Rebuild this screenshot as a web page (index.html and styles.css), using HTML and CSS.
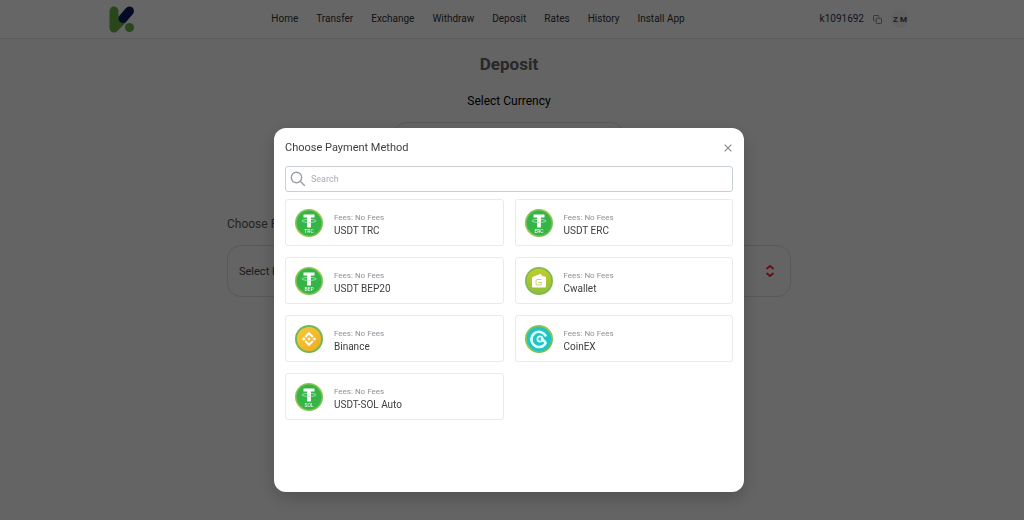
FILE: index.html
```html
<!DOCTYPE html>
<html lang="en">
<head>
<meta charset="utf-8">
<meta name="viewport" content="width=device-width, initial-scale=1">
<title>Deposit</title>
<link rel="stylesheet" href="styles.css">
</head>
<body>
<svg class="sprite" width="0" height="0" aria-hidden="true">
  <defs>
    <linearGradient id="lime" x1="0" y1="0" x2="1" y2="1"><stop offset="0" stop-color="#6fbf5a"/><stop offset=".5" stop-color="#a0c84a"/><stop offset="1" stop-color="#62b45a"/></linearGradient>
    <linearGradient id="gold" x1="0" y1="0" x2="1" y2="1"><stop offset="0" stop-color="#f5cb3c"/><stop offset="1" stop-color="#f2a91f"/></linearGradient>
    <linearGradient id="olive" x1="0" y1="0" x2="0" y2="1"><stop offset="0" stop-color="#c3cc2c"/><stop offset="1" stop-color="#8fbf3c"/></linearGradient>
    <symbol id="tether" viewBox="0 0 28 28">
      <circle cx="14" cy="14" r="14" fill="url(#lime)"/>
      <circle cx="14" cy="14" r="12.4" fill="#35b548"/>
      <path d="M8.500 5.500h11v3.100h-3.600v10h-3.800v-10H8.500z" fill="#fff"/>
      <path d="M12 10.500c-3 .1-5 .6-5 1.400s3 1.500 7 1.500 7-.7 7-1.500-2-1.300-5-1.400" fill="none" stroke="#b5e8bd" stroke-width=".8"/>
    </symbol>
  </defs>
</svg>

<header class="topbar">
  <div class="topbar-inner">
    <a class="logo" href="#" aria-label="Home page">
      <svg width="26" height="27" viewBox="0 0 26 27" fill="none" stroke-linecap="round" stroke-width="9">
        <path d="M5 5v17l9-9" stroke="#66b245" stroke-linejoin="round"/>
        <path d="M14 12.500l6.500-7.500" stroke="#0a1d5c"/>
        <circle cx="20.500" cy="21.500" r="4.500" fill="#66b245"/>
      </svg>
    </a>
    <nav class="nav" aria-label="Main">
      <a href="#">Home</a><a href="#">Transfer</a><a href="#">Exchange</a><a href="#">Withdraw</a><a href="#">Deposit</a><a href="#">Rates</a><a href="#">History</a><a href="#">Install App</a>
    </nav>
    <div class="account">
      <span class="account-id">k1091692</span>
      <button class="copy" type="button" aria-label="Copy account number">
        <svg width="9" height="9" viewBox="0 0 10 10" fill="none" stroke="#777" stroke-width="1"><rect x="3.500" y="3.500" width="6" height="6" rx="1.200"/><path d="M2 6.500H1.500a1 1 0 0 1-1-1v-4a1 1 0 0 1 1-1h4a1 1 0 0 1 1 1V2"/></svg>
      </button>
      <button class="avatar" type="button">Z M</button>
    </div>
  </div>
</header>

<main class="page">
  <h1>Deposit</h1>
  <h2 id="currency-label">Select Currency</h2>
  <button class="picker currency" type="button" aria-labelledby="currency-label"></button>
  <div class="method">
    <p class="method-label">Choose Payment Method</p>
    <button class="picker method-picker" type="button">
      <span>Select Payment Method</span>
      <svg width="10" height="14" viewBox="0 0 10 14" fill="none" stroke="#ff2020" stroke-width="1.700" stroke-linecap="round" stroke-linejoin="round"><path d="M2 4.500L5 2l3 2.500M2 9.500L5 12l3-2.500"/></svg>
    </button>
  </div>
</main>

<div class="overlay">
  <section class="modal" role="dialog" aria-modal="true" aria-labelledby="modal-title">
    <div class="modal-head">
      <h3 id="modal-title">Choose Payment Method</h3>
      <button class="close" type="button" aria-label="Close">
        <svg width="8" height="8" viewBox="0 0 8 8" stroke="#858a93" stroke-width="1.200"><path d="M.7.7l6.600 6.600M7.300.7L.7 7.300"/></svg>
      </button>
    </div>
    <label class="search">
      <svg width="16" height="16" viewBox="0 0 16 16" fill="none" stroke="#9ba0a8" stroke-width="1.400" stroke-linecap="round"><circle cx="6.500" cy="6.500" r="5.200"/><path d="M10.500 10.500l4 4"/></svg>
      <input type="search" placeholder="Search" aria-label="Search">
    </label>
    <div class="methods">
      <button class="card" type="button">
        <svg class="coin" viewBox="0 0 28 28"><use href="#tether"/><text x="14" y="23.500">TRC</text></svg>
        <span class="info"><span class="fees">Fees: No Fees</span><span class="name">USDT TRC</span></span>
      </button>
      <button class="card" type="button">
        <svg class="coin" viewBox="0 0 28 28"><use href="#tether"/><text x="14" y="23.500">ERC</text></svg>
        <span class="info"><span class="fees">Fees: No Fees</span><span class="name">USDT ERC</span></span>
      </button>
      <button class="card" type="button">
        <svg class="coin" viewBox="0 0 28 28"><use href="#tether"/><text x="14" y="23.500">BEP</text></svg>
        <span class="info"><span class="fees">Fees: No Fees</span><span class="name">USDT BEP20</span></span>
      </button>
      <button class="card" type="button">
        <svg class="coin" viewBox="0 0 28 28"><circle cx="14" cy="14" r="14" fill="#7dbb50"/><circle cx="14" cy="14" r="12.200" fill="url(#olive)"/><path d="M7.500 10.500l8-3.200 1.500 2.700h3.500v10H7.500z" fill="#fff" stroke="#fff" stroke-linejoin="round"/><path d="M16.500 12.500h-4a1.500 1.500 0 0 0-1.500 1.500v2.500a1.500 1.500 0 0 0 1.500 1.500h2.500a1.500 1.500 0 0 0 1.500-1.500v-1h-3" fill="none" stroke="#b9cf5c" stroke-width=".9"/><path d="M17 8.500l1.500 1.500" stroke="#fff"/></svg>
        <span class="info"><span class="fees">Fees: No Fees</span><span class="name">Cwallet</span></span>
      </button>
      <button class="card" type="button">
        <svg class="coin" viewBox="0 0 28 28"><circle cx="14" cy="14" r="14" fill="#72b854"/><circle cx="14" cy="14" r="12" fill="url(#gold)"/><g fill="none" stroke="#fff" stroke-width="2"><path d="M10.200 12L14 8.200l3.800 3.800M10.200 16l3.800 3.800 3.800-3.800"/></g><path d="M14 12.200l1.800 1.800-1.800 1.800-1.800-1.800zM8.700 12.200l1.800 1.800-1.800 1.800L6.900 14zM19.300 12.200l1.800 1.800-1.800 1.800-1.800-1.800z" fill="#fff"/></svg>
        <span class="info"><span class="fees">Fees: No Fees</span><span class="name">Binance</span></span>
      </button>
      <button class="card" type="button">
        <svg class="coin" viewBox="0 0 28 28"><circle cx="14" cy="14" r="14" fill="url(#lime)"/><circle cx="14" cy="14" r="12.200" fill="#1fc4c4"/><path d="M20.500 10.500A7.600 7.600 0 1 0 19.800 19.300q1.300-1.300 0-2.600L17 14" fill="none" stroke="#e4ffff" stroke-width="2.600" stroke-linecap="round" stroke-linejoin="round"/><circle cx="15" cy="14" r="2.600" fill="none" stroke="#e4ffff" stroke-width="1.800"/></svg>
        <span class="info"><span class="fees">Fees: No Fees</span><span class="name">CoinEX</span></span>
      </button>
      <button class="card" type="button">
        <svg class="coin" viewBox="0 0 28 28"><use href="#tether"/><text x="14" y="23.500">SOL</text></svg>
        <span class="info"><span class="fees">Fees: No Fees</span><span class="name">USDT-SOL Auto</span></span>
      </button>
    </div>
  </section>
</div>
</body>
</html>
```

FILE: styles.css
```css
* { box-sizing: border-box; }

body {
  margin: 0;
  min-height: 100vh;
  padding-right: 6px;
  background: #fafafa;
  color: #222;
  font-family: Roboto, "Noto Sans", sans-serif;
}

button {
  margin: 0;
  padding: 0;
  border: 0;
  background: none;
  color: inherit;
  font: inherit;
  text-align: left;
}

h1, h2, h3, p { margin: 0; }
svg { display: block; }
.sprite { position: absolute; }

.topbar {
  margin-right: -6px;
  padding: 0 12px 0 6px;
  background: #fff;
  border-bottom: 1px solid #e8e8e8;
}
.topbar-inner {
  display: grid;
  grid-template-columns: 1fr auto 1fr;
  align-items: center;
  max-width: 800px;
  height: 38px;
  margin: 0 auto;
}
.logo { justify-self: start; }
.nav {
  display: flex;
  gap: 18px;
  margin-right: 62px;
}
.nav a {
  color: #333;
  font-size: 10px;
  line-height: 16px;
  text-decoration: none;
  white-space: nowrap;
}
.account {
  display: flex;
  justify-self: end;
  align-items: center;
  gap: 9px;
}
.account-id { color: #26384f; font-size: 10px; line-height: 16px; }
.avatar {
  width: 18px;
  height: 18px;
  border-radius: 50%;
  background: #f6f6f6;
  color: #444;
  font-size: 8px;
  font-weight: 700;
  text-align: center;
}

.page {
  display: flex;
  flex-direction: column;
  align-items: center;
  padding: 13px 12px;
}
h1 { color: #5f646c; font-size: 17px; line-height: 24px; }
h2 { margin-top: 16px; font-size: 12px; line-height: 18px; font-weight: 400; color: #000; }
.picker {
  border: 1px solid #dcdcdc;
  border-radius: 14px;
}
.currency { width: 232px; height: 52px; margin-top: 12px; }
.method { width: 100%; max-width: 564px; margin-top: 42px; }
.method-label { color: #55585e; font-size: 12px; line-height: 16px; }
.method-picker {
  display: flex;
  align-items: center;
  justify-content: space-between;
  width: 100%;
  height: 52px;
  margin-top: 13px;
  padding: 0 15px 0 11px;
  color: #444;
  font-size: 11px;
}

.overlay {
  position: fixed;
  inset: 0;
  padding: 128px 12px 28px 6px;
  background: rgba(0, 0, 0, .6);
}
.modal {
  width: 100%;
  max-width: 470px;
  min-height: 364px;
  margin: 0 auto;
  padding: 11px;
  border-radius: 12px;
  background: #fff;
  box-shadow: 0 6px 18px rgba(0, 0, 0, .2);
}
.modal-head {
  display: flex;
  align-items: center;
  justify-content: space-between;
  height: 17px;
}
h3 { color: #3c3e42; font-size: 11px; line-height: 17px; font-weight: 400; }
.close { padding: 1px; }
.search {
  display: flex;
  align-items: center;
  gap: 5px;
  height: 26px;
  margin-top: 10px;
  padding: 0 4px;
  border: 1px solid #c9cfd3;
  border-radius: 3px;
}
.search input {
  flex: 1;
  min-width: 0;
  padding: 0;
  border: 0;
  outline: 0;
  background: none;
  font: inherit;
  font-size: 9px;
}
.search input::placeholder { color: #a9adb3; }
.methods {
  display: grid;
  grid-template-columns: 1fr 1fr;
  gap: 11px;
  margin-top: 7px;
}
.card {
  display: flex;
  align-items: center;
  gap: 11px;
  height: 47px;
  padding: 0 9px;
  border: 1px solid #e8eaec;
  border-radius: 3px;
}
.coin { width: 28px; height: 28px; }
.coin text {
  fill: #fff;
  font-size: 5px;
  text-anchor: middle;
}
.info { display: grid; padding-top: 5px; }
.fees { color: #8d9197; font-size: 8px; line-height: 12px; }
.name { color: #3c3e42; font-size: 10px; line-height: 14px; }
```
